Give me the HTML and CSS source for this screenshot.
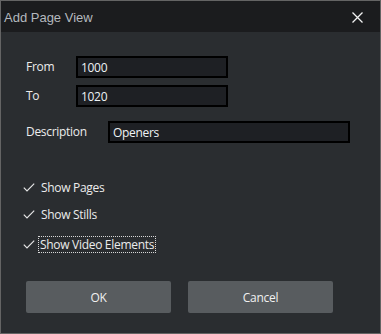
FILE: index.html
```html
<!DOCTYPE html>
<html lang="en">
<head>
    <meta charset="UTF-8">
    <meta name="viewport" content="width=device-width, initial-scale=1.0">
    <title>Add Page View</title>
    <link rel="stylesheet" href="styles.css">
</head>
<body>
    <div class="dialog">
        <div class="titlebar">
            <span class="title">Add Page View</span>
            <button class="close" aria-label="Close">
                <svg width="11" height="11" viewBox="0 0 11 11">
                    <path d="M0.5 0.5 L10.5 10.5 M10.5 0.5 L0.5 10.5" stroke="#f2f2f2" stroke-width="1.3" fill="none"/>
                </svg>
            </button>
        </div>
        <div class="content">
            <div class="range">
                <div class="field">
                    <label for="from">From</label>
                    <input type="text" id="from" value="1000">
                </div>
                <div class="field">
                    <label for="to">To</label>
                    <input type="text" id="to" value="1020">
                </div>
            </div>
            <div class="field desc">
                <label for="description">Description</label>
                <input type="text" id="description" value="Openers">
            </div>

            <div class="options">
                <div class="option">
                    <svg class="check" width="12" height="9" viewBox="0 0 12 9">
                        <path d="M0.8 4.6 L4 7.8 L11.2 0.6" stroke="#e6e6e6" stroke-width="1.2" fill="none"/>
                    </svg>
                    <span>Show Pages</span>
                </div>
                <div class="option">
                    <svg class="check" width="12" height="9" viewBox="0 0 12 9">
                        <path d="M0.8 4.6 L4 7.8 L11.2 0.6" stroke="#e6e6e6" stroke-width="1.2" fill="none"/>
                    </svg>
                    <span>Show Stills</span>
                </div>
                <div class="option last">
                    <svg class="check" width="12" height="9" viewBox="0 0 12 9">
                        <path d="M0.8 4.6 L4 7.8 L11.2 0.6" stroke="#e6e6e6" stroke-width="1.2" fill="none"/>
                    </svg>
                    <span class="focused">Show Video Elements</span>
                </div>
            </div>

            <div class="buttons">
                <button class="btn">OK</button>
                <button class="btn">Cancel</button>
            </div>
        </div>
    </div>
</body>
</html>
```

FILE: styles.css
```css
body {
    margin: 0;
    background-color: #2a2d30;
    font-family: "Open Sans", "Noto Sans", sans-serif;
    font-size: 12px;
    letter-spacing: -0.3px;
    color: #ececec;
}
.dialog {
    width: 381px;
    height: 334px;
    box-sizing: border-box;
    border: 1px solid #646464;
    background-color: #2a2d30;
    display: flex;
    flex-direction: column;
}
.titlebar {
    height: 31px;
    background-color: #1b1c1e;
    display: flex;
    align-items: center;
    justify-content: space-between;
    padding-left: 3px;
}
.title {
    font-family: "Liberation Sans", Arial, sans-serif;
    font-size: 13px;
    letter-spacing: 0;
    color: #b4b9be;
    margin-top: 1px;
}
.close {
    background: none;
    border: none;
    padding: 0;
    width: 46px;
    height: 31px;
    display: flex;
    align-items: center;
    justify-content: center;
    margin-top: 2px;
}
.content {
    padding: 24px 0 0 25px;
    display: flex;
    flex-direction: column;
}
.range {
    display: flex;
    flex-direction: column;
    gap: 7px;
}
.field {
    display: flex;
    align-items: center;
}
.field label {
    width: 50px;
    line-height: 22px;
}
.field input {
    width: 152px;
    height: 22px;
    box-sizing: border-box;
    border: 2px solid #000000;
    background-color: #1e2024;
    color: #eef2f5;
    font-family: "Open Sans", "Noto Sans", sans-serif;
    font-size: 12px;
    letter-spacing: -0.3px;
    padding: 0 0 0 3px;
    outline: none;
}
.desc {
    margin-top: 14px;
}
.desc label {
    width: 82px;
}
.desc input {
    width: 242px;
}
.options {
    margin-top: 36px;
    display: flex;
    flex-direction: column;
}
.option {
    display: flex;
    align-items: center;
    height: 17px;
    margin-bottom: 10px;
}
.option.last {
    margin-top: 3px;
}
.check {
    margin-left: -3px;
    margin-right: 6px;
}
.option span {
    line-height: 15px;
}
.focused {
    outline: 1px dotted #d8d8d8;
    padding: 0 1px;
    margin-left: -2px;
}
.buttons {
    margin-top: 18px;
    display: flex;
    gap: 17px;
}
.btn {
    width: 145px;
    height: 32px;
    background-color: #585c5f;
    color: #f0f0f0;
    border: none;
    border-radius: 2px;
    font-family: "Open Sans", "Noto Sans", sans-serif;
    font-size: 12px;
    letter-spacing: -0.3px;
}
```
